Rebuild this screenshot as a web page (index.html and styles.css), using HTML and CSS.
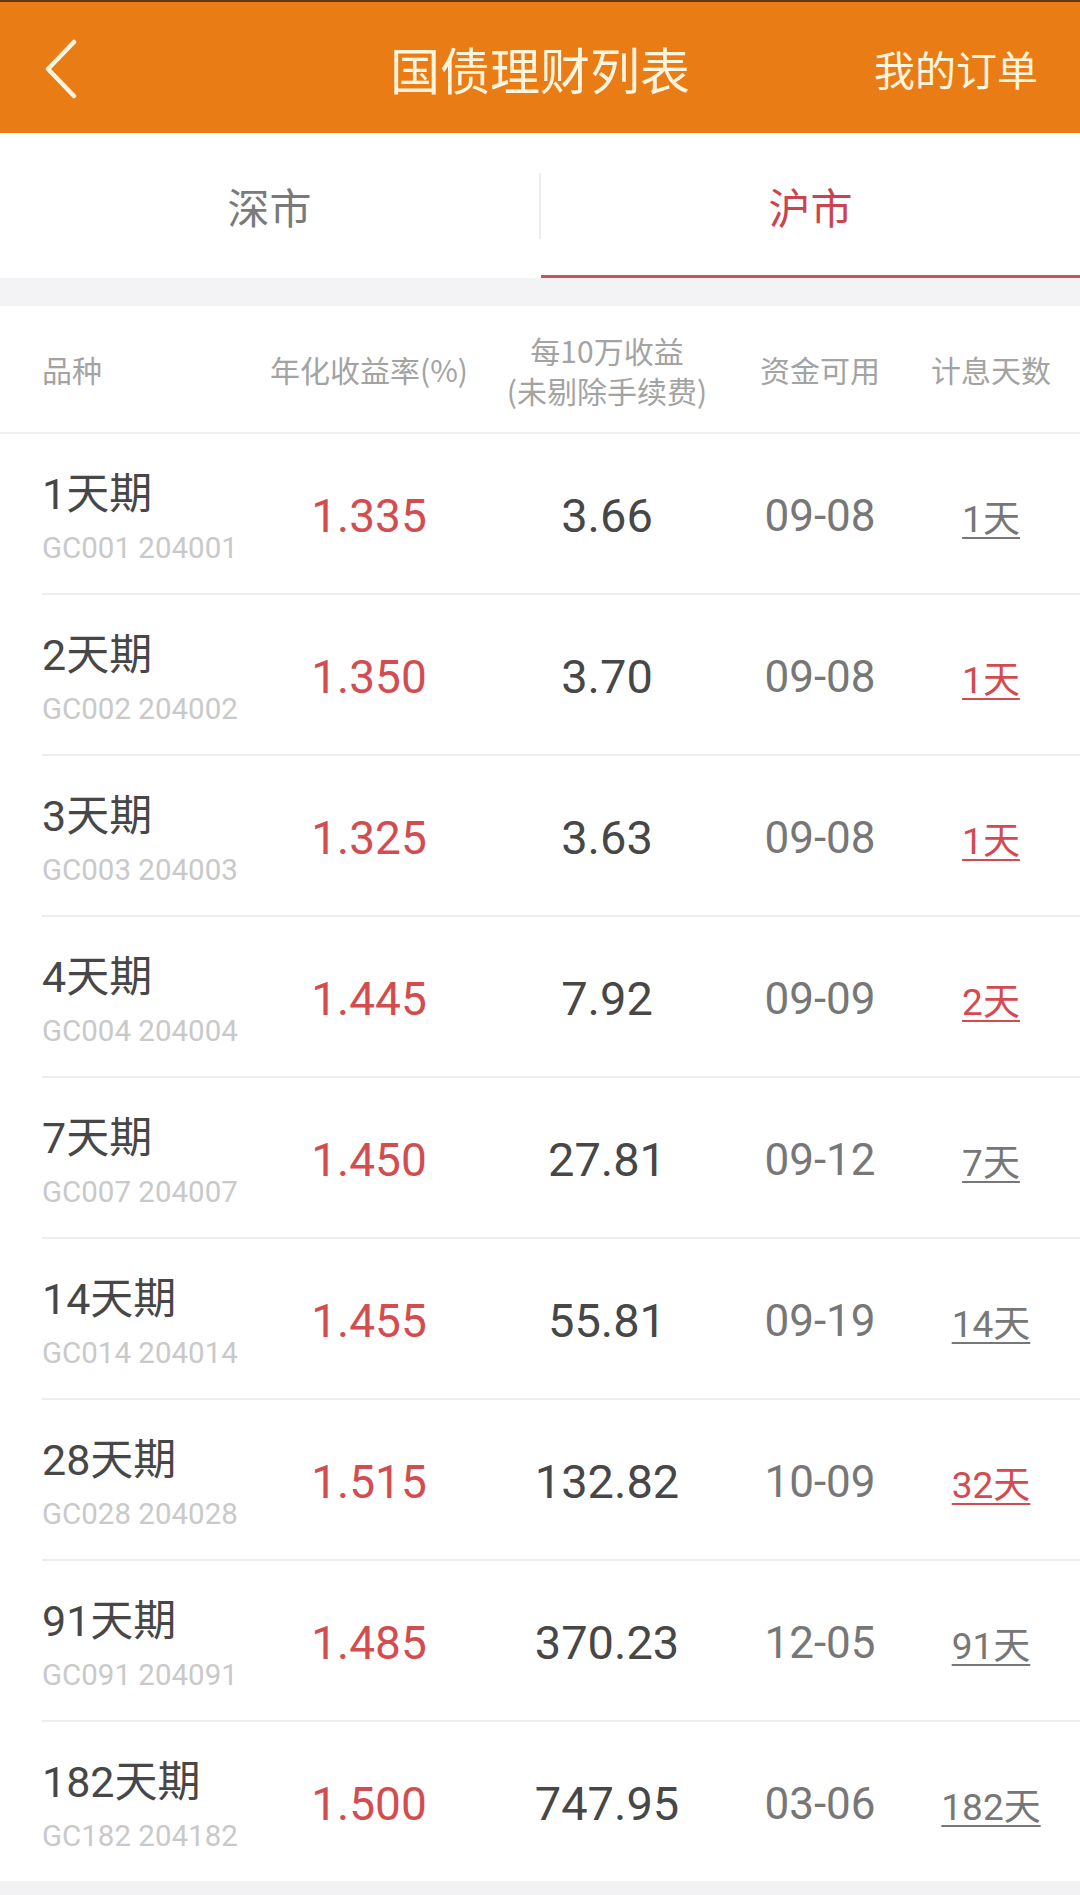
FILE: index.html
```html
<!DOCTYPE html>
<html lang="zh-CN">
<head>
<meta charset="utf-8">
<title>国债理财列表</title>
<link rel="stylesheet" href="styles.css">
</head>
<body>
<header class="topbar">
  <div class="back">
    <svg width="36" height="60" viewBox="0 0 36 60"><polyline points="31,3 5,30 31,57" fill="none" stroke="#fff4de" stroke-width="4.5" stroke-linecap="round" stroke-linejoin="round"/></svg>
  </div>
  <h1 class="title">国债理财列表</h1>
  <div class="orders">我的订单</div>
</header>
<nav class="tabs">
  <div class="tab">深市</div>
  <div class="tab-divider"></div>
  <div class="tab active">沪市</div>
</nav>
<div class="gap"></div>
<section class="table">
  <div class="thead">
    <div class="th th-name">品种</div>
    <div class="th">年化收益率(%)</div>
    <div class="th th-two">每10万收益<br>(未剔除手续费)</div>
    <div class="th">资金可用</div>
    <div class="th">计息天数</div>
  </div>

  <div class="row">
    <div class="name"><span class="pname">1天期</span><span class="code">GC001 204001</span></div>
    <div class="rate">1.335</div><div class="income">3.66</div><div class="date">09-08</div>
    <div class="days"><span class="link">1天</span></div>
  </div>
  <div class="row">
    <div class="name"><span class="pname">2天期</span><span class="code">GC002 204002</span></div>
    <div class="rate">1.350</div><div class="income">3.70</div><div class="date">09-08</div>
    <div class="days"><span class="link red">1天</span></div>
  </div>
  <div class="row">
    <div class="name"><span class="pname">3天期</span><span class="code">GC003 204003</span></div>
    <div class="rate">1.325</div><div class="income">3.63</div><div class="date">09-08</div>
    <div class="days"><span class="link red">1天</span></div>
  </div>
  <div class="row">
    <div class="name"><span class="pname">4天期</span><span class="code">GC004 204004</span></div>
    <div class="rate">1.445</div><div class="income">7.92</div><div class="date">09-09</div>
    <div class="days"><span class="link red">2天</span></div>
  </div>
  <div class="row">
    <div class="name"><span class="pname">7天期</span><span class="code">GC007 204007</span></div>
    <div class="rate">1.450</div><div class="income">27.81</div><div class="date">09-12</div>
    <div class="days"><span class="link">7天</span></div>
  </div>
  <div class="row">
    <div class="name"><span class="pname">14天期</span><span class="code">GC014 204014</span></div>
    <div class="rate">1.455</div><div class="income">55.81</div><div class="date">09-19</div>
    <div class="days"><span class="link">14天</span></div>
  </div>
  <div class="row">
    <div class="name"><span class="pname">28天期</span><span class="code">GC028 204028</span></div>
    <div class="rate">1.515</div><div class="income">132.82</div><div class="date">10-09</div>
    <div class="days"><span class="link red">32天</span></div>
  </div>
  <div class="row">
    <div class="name"><span class="pname">91天期</span><span class="code">GC091 204091</span></div>
    <div class="rate">1.485</div><div class="income">370.23</div><div class="date">12-05</div>
    <div class="days"><span class="link">91天</span></div>
  </div>
  <div class="row last">
    <div class="name"><span class="pname">182天期</span><span class="code">GC182 204182</span></div>
    <div class="rate">1.500</div><div class="income">747.95</div><div class="date">03-06</div>
    <div class="days"><span class="link">182天</span></div>
  </div>
</section>
</body>
</html>
```

FILE: styles.css
```css
* { box-sizing: border-box; }
html, body { margin: 0; padding: 0; }
body {
  width: 1080px;
  min-height: 1895px;
  background: #f2f2f4;
  font-family: Roboto, "Noto Sans CJK SC", sans-serif;
}

.topbar {
  height: 133px;
  background: #e97c15;
  border-top: 2px solid #5e3a14;
  display: grid;
  grid-template-columns: 1fr auto 1fr;
  align-items: center;
  color: #fff4de;
}
.back { padding-left: 43px; display: flex; align-items: center; padding-top: 2px; }
.title {
  margin: 0;
  font-size: 50px;
  font-weight: 400;
  letter-spacing: 0;
  font-family: "Noto Sans CJK SC", sans-serif;
}
.orders {
  justify-self: end;
  padding-right: 42px;
  font-size: 41px;
  font-family: "Noto Sans CJK SC", sans-serif;
}

.tabs {
  height: 145px;
  background: #fff;
  display: flex;
  align-items: stretch;
}
.tab {
  flex: 1;
  display: flex;
  align-items: center;
  justify-content: center;
  font-size: 42px;
  color: #7a7a7a;
  font-family: "Noto Sans CJK SC", sans-serif;
  border-bottom: 3px solid transparent;
  padding-top: 3px;
}
.tab.active { color: #cc434e; border-bottom-color: #c9525b; }
.tab-divider {
  width: 2px;
  height: 66px;
  align-self: center;
  background: #ececec;
}

.gap { height: 28px; background: #f3f3f5; }

.table { background: #fff; }
.thead {
  height: 128px;
  padding-left: 42px;
  display: grid;
  grid-template-columns: 198px 258px 218px 208px 134px;
  align-items: center;
  border-bottom: 2px solid #efefef;
}
.th {
  font-size: 30px;
  color: #a3a3a3;
  text-align: center;
  line-height: 40px;
  font-family: "Noto Sans CJK SC", sans-serif;
  white-space: nowrap;
}
.th-name { text-align: left; }
.th-two { padding-top: 2px; }

.row {
  margin-left: 42px;
  height: 161px;
  display: grid;
  grid-template-columns: 198px 258px 218px 208px 134px;
  align-items: center;
  border-bottom: 2px solid #eeeeee;
}
.row.last { border-bottom: none; height: 159px; }

.name {
  display: flex;
  flex-direction: column;
  padding-top: 6px;
}
.pname {
  font-size: 43px;
  line-height: 52px;
  color: #474747;
}
.code {
  font-size: 29.5px;
  line-height: 36px;
  margin-top: 10px;
  color: #c9c9c9;
  white-space: nowrap;
}
.rate, .income, .date, .days {
  text-align: center;
  padding-top: 4px;
}
.rate { font-size: 46px; color: #d34d50; }
.income { font-size: 47px; color: #474747; }
.date { font-size: 44px; color: #777; }
.days { font-size: 37px; color: #777; }
.link {
  text-decoration: underline;
  text-decoration-thickness: 2px;
  text-underline-offset: 5px;
}
.link.red { color: #d34b50; }
```
